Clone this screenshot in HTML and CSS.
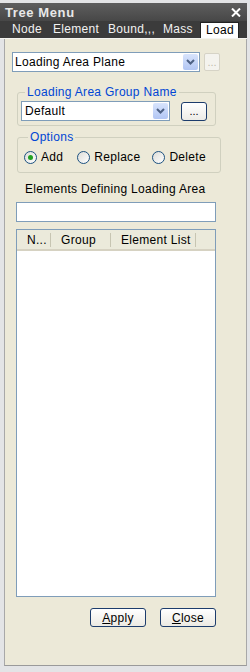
FILE: index.html
```html
<!DOCTYPE html>
<html lang="en">
<head>
    <meta charset="UTF-8">
    <title>Tree Menu</title>
    <link rel="stylesheet" href="styles.css">
</head>
<body>
    <div class="window">
        <div class="titlebar">
            <span class="title">Tree Menu</span>
            <svg class="close" width="10" height="9" viewBox="0 0 10 9"><path d="M1 0.5 L9 8.5 M9 0.5 L1 8.5" stroke="#fff" stroke-width="2"/></svg>
        </div>
        <div class="tabs">
            <span class="tab t-node">Node</span>
            <span class="tab t-elem">Element</span>
            <span class="tab t-bound">Bound,,,</span>
            <span class="tab t-mass">Mass</span>
            <span class="tab active">Load</span>
        </div>

        <div class="panel">
            <div class="row top-row">
                <div class="combo wide">
                    <span class="combo-text">Loading Area Plane</span>
                    <span class="combo-arrow"><svg width="9" height="6" viewBox="0 0 9 6"><path d="M1 1 L4.5 4.5 L8 1" fill="none" stroke="#4d6185" stroke-width="2"/></svg></span>
                </div>
                <button class="dots disabled">...</button>
            </div>

            <fieldset class="group">
                <legend>Loading Area Group Name</legend>
                <div class="row">
                    <div class="combo narrow">
                        <span class="combo-text">Default</span>
                        <span class="combo-arrow"><svg width="9" height="6" viewBox="0 0 9 6"><path d="M1 1 L4.5 4.5 L8 1" fill="none" stroke="#4d6185" stroke-width="2"/></svg></span>
                    </div>
                    <button class="dots">...</button>
                </div>
            </fieldset>

            <fieldset class="group options">
                <legend>Options</legend>
                <div class="radios">
                    <label class="radio checked"><span class="dot"></span>Add</label>
                    <label class="radio"><span class="dot"></span>Replace</label>
                    <label class="radio"><span class="dot"></span>Delete</label>
                </div>
            </fieldset>

            <div class="field-label">Elements Defining Loading Area</div>
            <div class="textbox"></div>

            <div class="listview">
                <div class="list-head">
                    <span class="col c1">N...</span>
                    <span class="col c2">Group</span>
                    <span class="col c3">Element List</span>
                </div>
            </div>

            <div class="buttons">
                <button class="btn"><u>A</u>pply</button>
                <button class="btn"><u>C</u>lose</button>
            </div>
        </div>
    </div>
</body>
</html>
```

FILE: styles.css
```css
* {
    box-sizing: border-box;
}

body {
    margin: 0;
    width: 250px;
    height: 672px;
    background: #e3e4e6;
    font-family: "Liberation Sans", Arial, sans-serif;
    font-size: 12px;
    letter-spacing: 0.3px;
    color: #000;
    overflow: hidden;
}

.window {
    height: 669px;
    padding-top: 3px;
}

.titlebar {
    height: 18px;
    margin-right: 3px;
    padding: 0 6px 0 5px;
    background: linear-gradient(#5e5e5e, #474747);
    display: flex;
    align-items: center;
    justify-content: space-between;
}

.title {
    color: #e8e8e8;
    font-weight: bold;
    font-size: 13px;
    letter-spacing: 0.6px;
}

.tabs {
    height: 18px;
    margin-right: 3px;
    background: #3b3b3b;
    display: flex;
    align-items: flex-end;
    padding-left: 7px;
    border-bottom: 1px solid #f4f4f0;
}

.tab {
    color: #f2f2f2;
    padding: 0 0 2px 5px;
    line-height: 14px;
    white-space: nowrap;
    flex: none;
}

.t-node {
    width: 41px;
}

.t-elem,
.t-bound {
    width: 55px;
}

.t-mass {
    width: 42px;
}

.active {
    background: #fff;
    color: #000;
    border: 1px solid #222;
    border-bottom: none;
    padding: 0 0 1px 5px;
    width: 39px;
}

.panel {
    height: 627px;
    margin: 0 3px 0 4px;
    background: #ece9d8;
    border-left: 1px solid #a8a8a8;
    border-right: 1px solid #a8a8a8;
    border-bottom: 1px solid #9a9a9a;
    padding: 13px 0 0 7px;
}

.row {
    display: flex;
    align-items: center;
}

.combo {
    height: 20px;
    background: #fff;
    border: 1px solid #7f9db9;
    display: flex;
    align-items: center;
    justify-content: space-between;
    padding: 0 1px 0 2px;
}

.combo.wide {
    width: 188px;
}

.combo.narrow {
    width: 149px;
    padding-left: 3px;
}

.combo-arrow {
    width: 15px;
    height: 16px;
    background: linear-gradient(#d8e4fc, #b2c6f4);
    border-radius: 2px;
    display: flex;
    align-items: center;
    justify-content: center;
}

.dots {
    font-family: "Liberation Sans", Arial, sans-serif;
    font-size: 11px;
    padding: 0;
    line-height: 10px;
}

.top-row .dots {
    width: 16px;
    height: 18px;
    margin-left: 4px;
    background: #f4f3ee;
    border: 1px solid #d6d3c6;
    border-radius: 2px;
    color: #c0bcac;
}

.group .dots {
    width: 26px;
    height: 19px;
    margin-left: 11px;
    background: linear-gradient(#fff, #ecebe6);
    border: 1px solid #1c3c6c;
    border-radius: 3px;
    color: #000;
}

.group {
    width: 199px;
    margin: 13px 0 0 5px;
    padding: 2px 0 4px 3px;
    border: 1px solid #d0d0bf;
    border-radius: 3px;
}

.group legend {
    color: #0046d5;
    padding: 0 2px;
    margin-left: 4px;
    line-height: 14px;
}

.options {
    margin-top: 4px;
    padding: 6px 0 8px 6px;
}

.radio {
    display: inline-flex;
    align-items: center;
    margin-right: 14px;
}

.radio:nth-child(2) {
    margin-right: 12px;
}

.dot {
    width: 13px;
    height: 13px;
    border: 1px solid #1c5180;
    border-radius: 50%;
    background: linear-gradient(135deg, #dcdcd7, #fff);
    margin-right: 4px;
    display: flex;
    align-items: center;
    justify-content: center;
}

.checked .dot::after {
    content: "";
    width: 5px;
    height: 5px;
    border-radius: 50%;
    background: #21a121;
}

.radios {
    display: flex;
    height: 14px;
    align-items: center;
}

.field-label {
    margin: 7px 0 0 13px;
    line-height: 18px;
}

.textbox {
    width: 200px;
    height: 20px;
    margin: 4px 0 0 4px;
    background: #fff;
    border: 1px solid #7f9db9;
}

.listview {
    width: 200px;
    height: 368px;
    margin: 7px 0 0 4px;
    background: #fff;
    border: 1px solid #7f9db9;
}

.list-head {
    height: 21px;
    background: #ebeadb;
    border-bottom: 2px solid #d6d2c2;
    display: flex;
    align-items: center;
}

.col {
    border-right: 1px solid #c7c5b2;
    height: 14px;
    line-height: 14px;
    white-space: nowrap;
}

.c1 {
    width: 34px;
    padding-left: 10px;
}

.c2 {
    width: 60px;
    padding-left: 10px;
}

.c3 {
    width: 85px;
    padding-left: 10px;
}

.buttons {
    display: flex;
    justify-content: flex-end;
    gap: 14px;
    width: 204px;
    margin-top: 11px;
}

.btn {
    width: 56px;
    height: 19px;
    font-family: "Liberation Sans", Arial, sans-serif;
    font-size: 12px;
    letter-spacing: 0.3px;
    padding: 0;
    background: linear-gradient(#fff, #eceae3);
    border: 1px solid #1c3c6c;
    border-radius: 3px;
}
```
